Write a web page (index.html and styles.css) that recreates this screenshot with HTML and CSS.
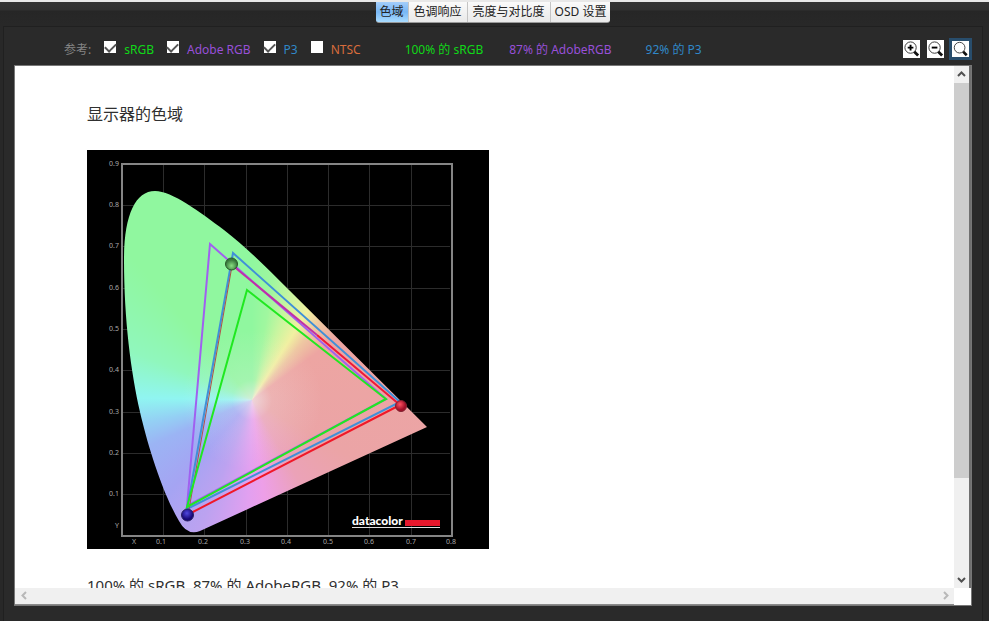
FILE: index.html
```
<!DOCTYPE html>
<html lang="zh-CN">
<head>
  <meta charset="UTF-8" />
  <title>色域</title>
  <link rel="stylesheet" href="styles.css">
</head>
<body>
  <nav class="tab-strip">
    <div class="tabs" role="tablist">
      <button class="tab active" role="tab" aria-selected="true">色域</button>
      <button class="tab" role="tab">色调响应</button>
      <button class="tab" role="tab">亮度与对比度</button>
      <button class="tab" role="tab">OSD 设置</button>
    </div>
  </nav>

  <main class="panel">
    <div class="toolbar">
      <div class="references">
        <span class="caption">参考:</span>
        <label class="reference srgb"><input type="checkbox" class="check" checked>sRGB</label>
        <label class="reference adobe"><input type="checkbox" class="check" checked>Adobe RGB</label>
        <label class="reference p3"><input type="checkbox" class="check" checked>P3</label>
        <label class="reference ntsc"><input type="checkbox" class="check">NTSC</label>
      </div>
      <div class="results">
        <span class="srgb">100% 的 sRGB</span>
        <span class="adobe">87% 的 AdobeRGB</span>
        <span class="p3">92% 的 P3</span>
      </div>
      <div class="zoom-buttons">
        <button class="zoom-button" aria-label="放大">
          <svg viewBox="0 0 18 18"><circle cx="8" cy="7.500" r="6"/><path class="handle" d="M12 12l4 4"/><path class="sign" d="M5 7.500h6M8 4.500v6"/></svg>
        </button>
        <button class="zoom-button" aria-label="缩小">
          <svg viewBox="0 0 18 18"><circle cx="8" cy="7.500" r="6"/><path class="handle" d="M12 12l4 4"/><path class="sign" d="M5 7.500h6"/></svg>
        </button>
        <button class="zoom-button focused" aria-label="适合窗口">
          <svg viewBox="0 0 18 18"><circle cx="8" cy="7.500" r="6"/><path class="handle" d="M12 12l4 4"/></svg>
        </button>
      </div>
    </div>

    <div class="viewer">
      <article class="page">
        <h1 class="title">显示器的色域</h1>
        <svg class="chart" viewBox="0 0 402 399" role="img" aria-label="显示器的色域">
          <defs>
            <clipPath id="locus">
              <path d="M340 277L202 140C180 118 158 96 137 80C113 62 85 41 68 41C48 41 37 66 37 110C37 170 44 222 53 262C60 292 74 340 92 371Q100 386 113 381Z"/>
            </clipPath>
            <radialGradient id="greenBall" cx="50%" cy="65%"><stop offset="0" stop-color="#88e080"/><stop offset="1" stop-color="#38783c"/></radialGradient>
            <radialGradient id="redBall" cx="40%" cy="35%"><stop offset="0" stop-color="#ff5060"/><stop offset="1" stop-color="#a01028"/></radialGradient>
            <radialGradient id="blueBall" cx="45%" cy="35%"><stop offset="0" stop-color="#5048e0"/><stop offset="1" stop-color="#180878"/></radialGradient>
          </defs>
          <rect width="402" height="399" fill="#000"/>
          <path class="grid" d="M76.500 14V385M117.500 14V385M159.500 14V385M200.500 14V385M241.500 14V385M282.500 14V385M324.500 14V385M35 55.500H363M35 96.500H363M35 138.500H363M35 179.500H363M35 220.500H363M35 262.500H363M35 303.500H363M35 344.500H363"/>
          <foreignObject width="402" height="399" clip-path="url(#locus)">
            <div class="spectrum"></div>
          </foreignObject>
          <path class="frame" d="M35 14H365V386H35Z"/>
          <g class="gamut">
            <path stroke="#a060f0" d="M123 94L299 249L100 356Z"/>
            <path stroke="#4090d8" d="M146 103L313 252L100 359Z"/>
            <path stroke="#f01828" d="M313 255L100 365"/>
            <path stroke="#b05048" stroke-width="1" d="M101 365L145 116"/>
            <path stroke="#c030a8" d="M145 115L230 185"/>
            <path stroke="#f01838" d="M230 185L313 255"/>
            <path stroke="#20e820" d="M160 140L299 249L100 357Z"/>
          </g>
          <circle cx="144.500" cy="114" r="6" fill="url(#greenBall)" stroke="#285828"/>
          <circle cx="314" cy="256" r="5.500" fill="url(#redBall)" stroke="#802030"/>
          <circle cx="100.500" cy="365" r="6" fill="url(#blueBall)" stroke="#282060"/>
          <g class="axis axis-y">
            <text x="32" y="16">0.9</text>
            <text x="32" y="57">0.8</text>
            <text x="32" y="98">0.7</text>
            <text x="32" y="140">0.6</text>
            <text x="32" y="181">0.5</text>
            <text x="32" y="222">0.4</text>
            <text x="32" y="264">0.3</text>
            <text x="32" y="305">0.2</text>
            <text x="32" y="346">0.1</text>
            <text x="32" y="378">Y</text>
          </g>
          <g class="axis axis-x">
            <text x="47" y="394">X</text>
            <text x="74" y="394">0.1</text>
            <text x="116" y="394">0.2</text>
            <text x="158" y="394">0.3</text>
            <text x="199" y="394">0.4</text>
            <text x="241" y="394">0.5</text>
            <text x="282" y="394">0.6</text>
            <text x="324" y="394">0.7</text>
            <text x="364" y="394">0.8</text>
          </g>
          <text class="brand" x="265" y="375">datacolor</text>
          <path fill="#e8182c" d="M318 370h35v6h-35z"/>
          <path fill="#e0e0e0" d="M265 377h88v1h-88z"/>
        </svg>
        <p class="summary">100% 的 sRGB, 87% 的 AdobeRGB, 92% 的 P3</p>
      </article>
      <div class="scrollbar vertical">
        <button class="arrow" aria-label="向上"><svg viewBox="0 0 9 9"><path d="M1 6l3.500-3.500L8 6"/></svg></button>
        <div class="track"><div class="thumb"></div></div>
        <button class="arrow" aria-label="向下"><svg viewBox="0 0 9 9"><path d="M1 3l3.500 3.500L8 3"/></svg></button>
      </div>
      <div class="scrollbar horizontal">
        <button class="arrow" aria-label="向左" disabled><svg viewBox="0 0 9 9"><path d="M6 1L2.500 4.500L6 8"/></svg></button>
        <button class="arrow" aria-label="向右" disabled><svg viewBox="0 0 9 9"><path d="M3 1l3.500 3.500L3 8"/></svg></button>
      </div>
    </div>
  </main>
</body>
</html>
```
FILE: styles.css
```
* {
  box-sizing: border-box;
}

body {
  display: flex;
  flex-direction: column;
  height: 100vh;
  margin: 0;
  border-top: 2px solid #e8e8e8;
  background: linear-gradient(#343434 0, #303030 10px, #262626 11px, #282828 24px);
  font-family: "Noto Sans", "Noto Sans CJK SC", sans-serif;
  font-size: 12px;
  overflow: hidden;
}

button {
  padding: 0;
  border: none;
  font: inherit;
}

.tab-strip {
  display: flex;
  justify-content: center;
  height: 24px;
}

.tabs {
  display: flex;
  height: 21px;
  border-bottom: 1px solid #999999;
  border-radius: 0 0 3px 3px;
  margin-right: 3px;
  overflow: hidden;
}

.tab {
  padding: 0 5px;
  border-right: 1px solid #c4c4c4;
  background: linear-gradient(#fafafa, #e9e9e9);
  color: #222222;
  line-height: 20px;
}

.tab:last-child {
  padding: 0 4px;
  border-right: none;
}

.tab.active {
  padding: 0 4px;
  background: linear-gradient(#a4cdfa, #78b7f5 50%, #a9dcff);
}

.panel {
  display: flex;
  flex: 1;
  flex-direction: column;
  min-height: 0;
  margin: 0 6px 0 3px;
  padding: 0 10px 15px;
  border: 1px solid #202020;
  border-bottom: none;
  background: #2a2a2a;
}

.toolbar {
  display: flex;
  align-items: center;
  height: 38px;
  padding-left: 50px;
  padding-top: 6px;
}

.references {
  display: flex;
  align-items: center;
  gap: 13px;
}

.caption {
  color: #858585;
}

.reference {
  display: flex;
  align-items: center;
  gap: 8px;
}

.check {
  display: grid;
  place-items: center;
  width: 12px;
  height: 12px;
  margin: 0 0 4px;
  background: #ffffff;
  appearance: none;
}

.check:checked::after {
  content: "";
  width: 9px;
  height: 5px;
  margin-bottom: 2px;
  border: solid #555555;
  border-width: 0 0 2px 2px;
  transform: rotate(-45deg);
}

.srgb {
  color: #10d818;
}

.adobe {
  color: #9850d8;
}

.p3 {
  color: #3088c8;
}

.ntsc {
  color: #d86c3c;
}

.results {
  display: flex;
  gap: 26px;
  margin-left: 44px;
}

.results .p3 {
  margin-left: 8px;
}

.zoom-buttons {
  display: flex;
  gap: 3px;
  margin-left: auto;
}

.zoom-button {
  width: 21px;
  height: 22px;
  border: 2px solid transparent;
  background: #ffffff;
  background-clip: padding-box;
}

.zoom-button.focused {
  width: 23px;
  border: 3px solid #284d6c;
}

.zoom-button svg {
  display: block;
  width: 100%;
  height: 100%;
  fill: none;
  stroke: #333333;
}

.zoom-button .handle {
  stroke: #111111;
  stroke-width: 3;
}

.zoom-button .sign {
  stroke: #000000;
  stroke-width: 2;
}

.viewer {
  display: grid;
  flex: 1;
  grid-template-columns: 1fr 17px;
  grid-template-rows: 1fr 17px;
  min-height: 0;
  border: 1px solid #777777;
  background: #ffffff;
}

.page {
  min-height: 0;
  padding: 36px 72px 0;
  color: #303030;
  overflow: hidden;
}

.title {
  margin: 0 0 24px;
  font-size: 16px;
  font-weight: normal;
  line-height: 24px;
}

.chart {
  display: block;
  width: 402px;
  height: 399px;
}

.summary {
  margin: 24px 0 0;
  font-size: 15px;
  line-height: 24px;
}

.spectrum {
  width: 402px;
  height: 399px;
  background:
    radial-gradient(circle at 165px 250px, rgba(240, 235, 240, 0.7), rgba(240, 235, 240, 0.2) 20px, rgba(240, 235, 240, 0) 70px),
    conic-gradient(at 165px 250px, #90f79f 0deg, #a0f79f 10deg, #c8f5a0 20deg, #f1f0a1 32deg, #eec8a2 41deg, #eda5a2 54deg, #eba4a6 120deg, #eba2b8 150deg, #ed9fe8 173deg, #e2a0f0 182deg, #bca2f0 202deg, #a5a4f3 222deg, #9bb4f4 246deg, #94d0f4 258deg, #90f5f1 271deg, #90f7bd 292deg, #90f79f 320deg, #90f79f 360deg);
}

.grid {
  fill: none;
  stroke: #2c2c2c;
}

.frame {
  fill: none;
  stroke: #858585;
  stroke-width: 2;
}

.gamut {
  fill: none;
  stroke-width: 2;
}

.axis {
  fill: #a8a8a8;
  font-size: 7px;
}

.axis-y {
  text-anchor: end;
}

.axis-x {
  text-anchor: middle;
}

.brand {
  fill: #ffffff;
  font-family: Lato, sans-serif;
  font-size: 12px;
  font-weight: 900;
}

.scrollbar {
  display: flex;
  background: #f0f0f0;
}

.vertical {
  flex-direction: column;
  border-right: 2px solid #707070;
}

.horizontal {
  justify-content: space-between;
  border-bottom: 1px solid #8a8a8a;
}

.arrow {
  display: grid;
  place-items: center;
  width: 15px;
  height: 17px;
  background: none;
}

.horizontal .arrow {
  width: 18px;
  height: 15px;
}

.arrow svg {
  width: 9px;
  height: 9px;
  fill: none;
  stroke: #505050;
  stroke-width: 2;
}

.arrow:disabled svg {
  stroke: #b8b8b8;
}

.track {
  flex: 1;
}

.thumb {
  height: 81%;
  background: #cdcdcd;
}
```
